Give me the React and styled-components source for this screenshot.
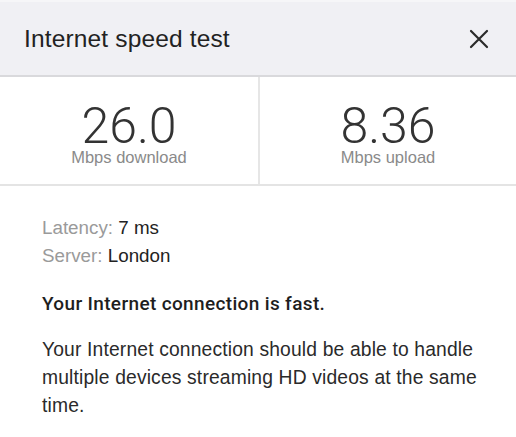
import styled, { createGlobalStyle } from "styled-components"

const Global = createGlobalStyle`
    body {
        margin: 0;
        background: #ffffff;
        font-family: "Liberation Sans", Arial, sans-serif;
    }
`
const Panel = styled.div`
    width: 516px;
    height: 437px;
    overflow: hidden;
    background: #ffffff;
`
const Header = styled.div`
    height: 77px;
    box-sizing: border-box;
    display: flex;
    align-items: center;
    justify-content: space-between;
    padding: 0 24px 0 24px;
    background: #f0f0f4;
    border-top: 2px solid #f6f6f8;
    border-bottom: 2px solid #d9d9dc;
`
const Title = styled.h1`
    margin: 0;
    font-size: 24.5px;
    font-weight: 400;
    color: #222222;
    letter-spacing: 0.15px;
`
const Close = styled.button`
    border: 0;
    padding: 0;
    background: none;
    width: 22px;
    height: 22px;
    display: flex;
    align-items: center;
    justify-content: center;
    margin-right: 2px;
`
const Stats = styled.div`
    display: grid;
    grid-template-columns: 260px 1fr;
    height: 109px;
    box-sizing: border-box;
    border-bottom: 2px solid #e4e4e4;
`
const Stat = styled.div`
    display: flex;
    flex-direction: column;
    align-items: center;
    padding-top: 26px;
    border-right: ${p => (p.$divider ? "2px solid #e6e6e6" : "none")};
`
const Value = styled.div`
    font-family: Roboto, "Liberation Sans", sans-serif;
    font-weight: 300;
    font-size: 50px;
    line-height: 46px;
    color: #333333;
`
const Unit = styled.div`
    font-size: 16.5px;
    line-height: 16px;
    color: #8a8a8a;
`
const Body = styled.div`
    padding: 28px 28px 0 42px;
    color: #222222;
`
const Meta = styled.div`
    font-size: 18.8px;
    line-height: 28px;
`
const Label = styled.span`
    color: #9a9a9a;
`
const Verdict = styled.p`
    margin: 20px 0 0 0;
    font-family: Roboto, "Liberation Sans", sans-serif;
    font-size: 19px;
    line-height: 28px;
    font-weight: 500;
    letter-spacing: 0.35px;
    color: #1e1e1e;
`
const Text = styled.p`
    margin: 18px 0 0 0;
    font-size: 19.3px;
    line-height: 28px;
    letter-spacing: 0.15px;
    color: #2a2a2a;
`

function App() {
    return (
        <Panel>
            <Global />
            <Header>
                <Title>Internet speed test</Title>
                <Close aria-label="close">
                    <svg width="20" height="20" viewBox="0 0 20 20">
                        <path d="M2 2 L18 18 M18 2 L2 18" stroke="#2a2a2a" strokeWidth="2.2" strokeLinecap="round" />
                    </svg>
                </Close>
            </Header>
            <Stats>
                <Stat $divider>
                    <Value>26.0</Value>
                    <Unit>Mbps download</Unit>
                </Stat>
                <Stat>
                    <Value>8.36</Value>
                    <Unit>Mbps upload</Unit>
                </Stat>
            </Stats>
            <Body>
                <Meta><Label>Latency:</Label> 7 ms</Meta>
                <Meta><Label>Server:</Label> London</Meta>
                <Verdict>Your Internet connection is fast.</Verdict>
                <Text>
                    Your Internet connection should be able to handle multiple devices streaming HD videos at the same time.
                </Text>
            </Body>
        </Panel>
    )
}

export default App
